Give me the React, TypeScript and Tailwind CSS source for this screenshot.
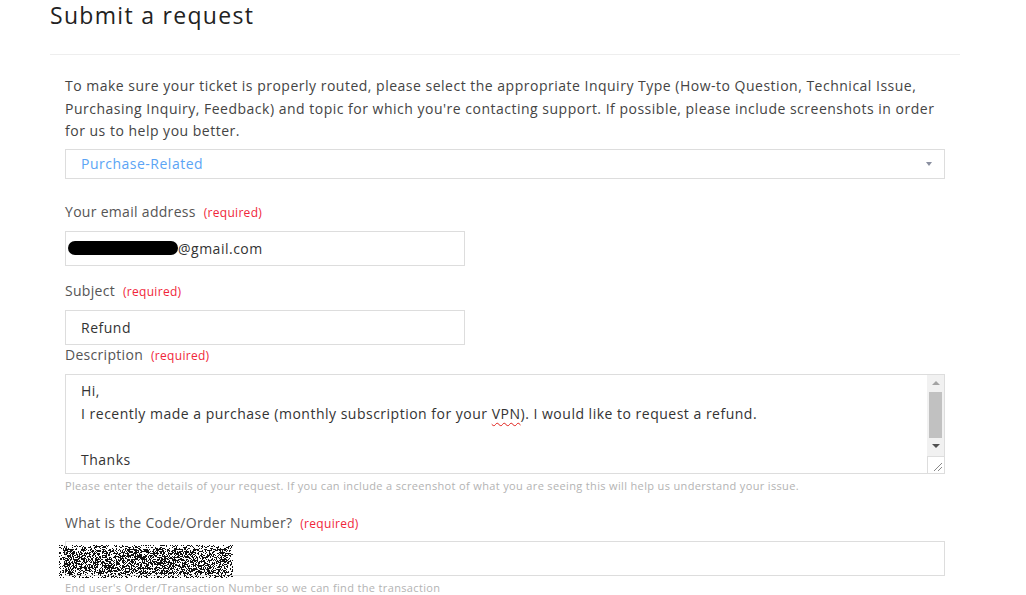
import React from 'react';

const font = { fontFamily: '"Open Sans", "DejaVu Sans", sans-serif' };

function Required() {
  return <span className="ml-1 text-[12px] leading-none tracking-[0.3px] text-[#f0263a]">(required)</span>;
}

function Noise() {
  const cells: React.ReactNode[] = [];
  let seed = 7;
  const rnd = () => {
    seed = (seed * 16807) % 2147483647;
    return seed / 2147483647;
  };
  for (let y = 0; y < 33; y++) {
    for (let x = 0; x < 174; x++) {
      const edge = Math.min(x, 173 - x, y, 32 - y);
      const p = edge < 4 ? 0.3 : 0.55;
      if (rnd() < p) cells.push(<rect key={`${x}-${y}`} x={x} y={y} width={1} height={1} fill="#111" />);
    }
  }
  return (
    <svg width="174" height="33" viewBox="0 0 174 33" className="block" aria-hidden="true">
      {cells}
    </svg>
  );
}

export default function App() {
  return (
    <div className="min-h-[595px] bg-white text-[#333]" style={font}>
      <div className="mx-[50px] w-[910px]">
        <h1 className="pt-px text-[23px] leading-[28px] tracking-[1.3px] text-[#222]">Submit a request</h1>
        <div className="mt-[25px] border-t border-[#eee]" />
        <div className="px-[15px] pt-[20px]">
          <p className="text-[14px] leading-[22.5px] tracking-[0.5px] text-[#444]">
            To make sure your ticket is properly routed, please select the appropriate Inquiry Type (How-to Question, Technical Issue, Purchasing Inquiry, Feedback) and topic for which you're contacting support. If possible, please include screenshots in order for us to help you better.
          </p>
          <div className="mt-[6px] flex h-[30px] w-[880px] items-center justify-between border border-[#ddd] pl-[15px] pr-[12px]">
            <span className="text-[14px] tracking-[0.5px] text-[#5ba4f5]">Purchase-Related</span>
            <span className="h-0 w-0 border-x-[3px] border-t-[4px] border-x-transparent border-t-[#8a8fa0]" />
          </div>

          <label className="mt-[23px] block text-[14px] leading-[20px] tracking-[0.3px] text-[#555]">
            Your email address <Required />
          </label>
          <div className="mt-[9px] flex h-[35px] w-[400px] items-center border border-[#ddd] pl-[2px]">
            <span className="h-[14px] w-[110px] rounded-full bg-black" />
            <span className="text-[14px] tracking-[0.5px] text-[#333]">@gmail.com</span>
          </div>

          <label className="mt-[15px] block text-[14px] leading-[20px] tracking-[0.3px] text-[#555]">
            Subject <Required />
          </label>
          <div className="mt-[9px] flex h-[35px] w-[400px] items-center border border-[#ddd] pl-[15px]">
            <span className="text-[14px] tracking-[0.5px] text-[#333]">Refund</span>
          </div>

          <label className="block text-[14px] leading-[20px] tracking-[0.3px] text-[#555]">
            Description <Required />
          </label>
          <div className="mt-[9px] flex h-[100px] w-[880px] border border-[#ddd]">
            <div className="flex-1 overflow-hidden pl-[15px] pt-[4px] text-[14px] leading-[23px] tracking-[0.5px] text-[#333]">
              <div>Hi,</div>
              <div>
                I recently made a purchase (monthly subscription for your{' '}
                <span className="underline decoration-[#e0201b] decoration-wavy decoration-1 underline-offset-[3px]">VPN</span>). I would like to request a refund.
              </div>
              <div>&nbsp;</div>
              <div>Thanks</div>
            </div>
            <div className="flex w-[17px] flex-col bg-[#f1f1f1]">
              <div className="flex h-[17px] items-center justify-center">
                <span className="h-0 w-0 border-x-[4px] border-b-[4px] border-x-transparent border-b-[#a3a3a3]" />
              </div>
              <div className="mx-[2px] h-[46px] bg-[#c1c1c1]" />
              <div className="flex h-[17px] items-center justify-center">
                <span className="h-0 w-0 border-x-[4px] border-t-[4px] border-x-transparent border-t-[#505050]" />
              </div>
              <div className="mt-auto h-[17px] border-l border-t border-[#ddd] bg-white">
                <svg width="16" height="16" viewBox="0 0 16 16" aria-hidden="true">
                  <path d="M14 6L6 14M14 10L10 14" stroke="#888" strokeWidth="1" />
                </svg>
              </div>
            </div>
          </div>
          <p className="mt-[5px] text-[11px] leading-[14px] tracking-[0.35px] text-[#b3b3b3]">
            Please enter the details of your request. If you can include a screenshot of what you are seeing this will help us understand your issue.
          </p>

          <label className="mt-[20px] block text-[14px] leading-[20px] tracking-[0.3px] text-[#555]">
            What is the Code/Order Number? <Required />
          </label>
          <div className="relative mt-[8px] h-[35px] w-[880px] border border-[#ddd]">
            <div className="absolute left-[-7px] top-[3px]">
              <Noise />
            </div>
          </div>
          <p className="mt-[5px] text-[11px] leading-[14px] tracking-[0.35px] text-[#b3b3b3]">
            End user's Order/Transaction Number so we can find the transaction
          </p>
        </div>
      </div>
    </div>
  );
}
